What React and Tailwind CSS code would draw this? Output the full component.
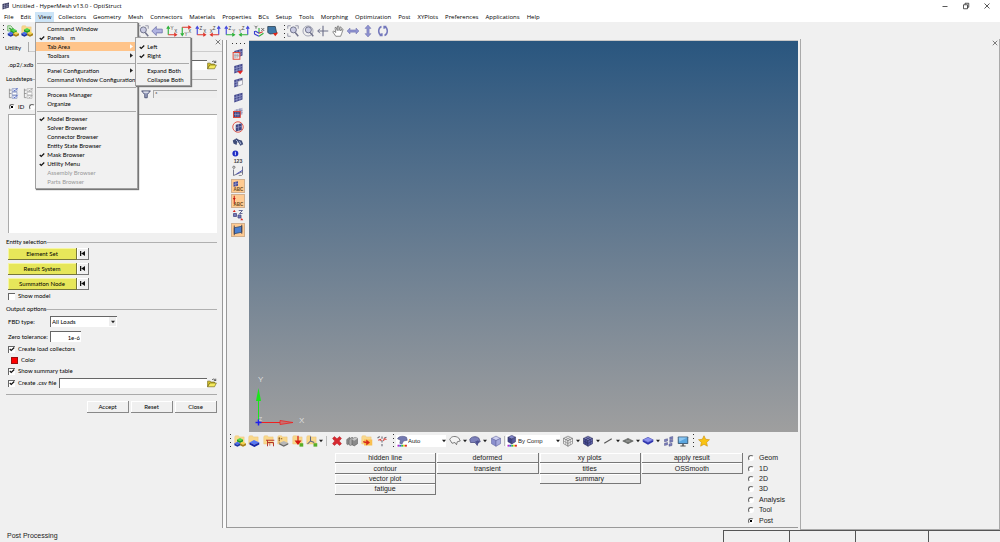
import { useState } from "react";
import clsx from "clsx";

const MENUS = [
  "File", "Edit", "View", "Collectors", "Geometry", "Mesh", "Connectors", "Materials", "Properties", "BCs",
  "Setup", "Tools", "Morphing", "Optimization", "Post", "XYPlots", "Preferences", "Applications", "Help",
];

const VIEW_MENU = [
  [
    { label: "Command Window" },
    { label: "Panels", hint: "m", checked: true },
    { label: "Tab Area", sub: true, active: true },
    { label: "Toolbars", sub: true },
  ],
  [
    { label: "Panel Configuration", sub: true },
    { label: "Command Window Configuration", sub: true },
  ],
  [{ label: "Process Manager" }, { label: "Organize" }],
  [
    { label: "Model Browser", checked: true },
    { label: "Solver Browser" },
    { label: "Connector Browser" },
    { label: "Entity State Browser" },
    { label: "Mask Browser", checked: true },
    { label: "Utility Menu", checked: true },
    { label: "Assembly Browser", disabled: true },
    { label: "Parts Browser", disabled: true },
  ],
];

const TAB_AREA_MENU = [
  [
    { label: "Left", checked: true },
    { label: "Right", checked: true },
  ],
  [{ label: "Expand Both" }, { label: "Collapse Both" }],
];

const PANEL_COLUMNS = [
  ["hidden line", "contour", "vector plot", "fatigue"],
  ["deformed", "transient"],
  ["xy plots", "titles", "summary"],
  ["apply result", "OSSmooth"],
];

const PAGES = ["Geom", "1D", "2D", "3D", "Analysis", "Tool", "Post"];

/* ---------- icons ---------- */

function Svg({ children, className = "size-3" }) {
  return (
    <svg viewBox="0 0 16 16" className={clsx("shrink-0", className)} fill="none" aria-hidden="true">
      {children}
    </svg>
  );
}

const Folder = () => (
  <path d="M1 2.5l1-1.5h4l1 1.5h6.5v9.5H1z" fill="#f9d88c" stroke="#ecc070" strokeWidth=".6" />
);

const Block = ({ x, y, c, d }) => (
  <g>
    <path d={`M${x} ${y + 2}l4-2 4 2-4 2z`} fill={c} />
    <path d={`M${x} ${y + 2}l4 2 4-2v2.5l-4 2-4-2z`} fill={d} />
  </g>
);

const IconBlocks = () => (
  <Svg>
    <Folder />
    <Block x={4} y={4} c="#4fd84a" d="#1f9c26" />
    <Block x={0.5} y={9} c="#4a6cf0" d="#1d35a8" />
    <Block x={8} y={9} c="#f5d54a" d="#a88018" />
  </Svg>
);
const IconImportBlocks = () => (
  <Svg>
    <path d="M1 1h4l2 2v5H1z" fill="#d5ecd0" stroke="#58a850" />
    <path d="M3 4l5 4M8 4v4H4" stroke="#2b9a2b" strokeWidth="1.6" />
    <Block x={5} y={5} c="#4fd84a" d="#1f9c26" />
    <Block x={1} y={9} c="#4a6cf0" d="#1d35a8" />
    <Block x={8} y={9} c="#f5d54a" d="#a88018" />
  </Svg>
);
const IconBlueBlock = () => (
  <Svg>
    <Folder />
    <path d="M2 10l6-3.500 7 3.500-6.500 3z" fill="#5577f5" />
    <path d="M2 10l6.500 3 6.500-3v2.500L8.500 16 2 12.500z" fill="#1626a5" />
  </Svg>
);
const IconProperty = () => (
  <Svg>
    <Folder />
    <path d="M4 7h11M6 7v8M6 10h7M9 14V10h5v5" stroke="#b5342a" strokeWidth="1.300" />
    <path d="M8 12h4" stroke="#eee" />
  </Svg>
);
const IconMaterial = () => (
  <Svg>
    <Folder />
    <path d="M3 3v7M2 5h5" stroke="#8a5a20" strokeWidth="1.500" strokeDasharray="2 1" />
    <path d="M3 10.500L9 8l6 2.500-6 3z" fill="#b7b7b7" />
    <path d="M3 10.500l6 3 6-3v2L9 15.500l-6-3z" fill="#6a6a6a" />
  </Svg>
);
const IconLoad = () => (
  <Svg>
    <Folder />
    <path d="M8 1v9M5 8h6l-3 4z" stroke="#d3180f" strokeWidth="1.600" fill="#d3180f" />
    <rect x="10" y="11" width="5" height="4.500" fill="#58ae28" />
  </Svg>
);
const IconSystem = () => (
  <Svg>
    <Folder />
    <path d="M6 2v6l-4 4M6 8l5 2" stroke="#5f6480" strokeWidth="1.400" />
    <rect x="10" y="11" width="5" height="4.500" fill="#58ae28" />
  </Svg>
);
const IconDelete = () => (
  <Svg>
    <path d="M2 4.500L4.500 2 8 5l3.500-3L14 4.500 11 8l3 3.500-2.500 2.500L8 11l-3.500 3L2 11.500 5 8z" fill="#d62a30" stroke="#a9161c" strokeWidth=".6" />
  </Svg>
);
const IconStack = () => (
  <Svg>
    <path d="M1 6l4-3v8l-3 2-1-1z" fill="#8d8d8d" stroke="#555" strokeWidth=".7" />
    <path d="M4 6l4-3 2 1v8l-4 2-2-1z" fill="#a9a9a9" stroke="#555" strokeWidth=".7" />
    <path d="M8 6l4-3 3.500 1.500v7L11 14.500 8 13z" fill="#8a8a8a" stroke="#555" strokeWidth=".7" />
    <path d="M8 6l4-3 3.500 1.500L11 7.500z" fill="#c6c6c6" />
  </Svg>
);
const IconCardEdit = () => (
  <Svg>
    <Folder />
    <path d="M4 6h11v8H4z" fill="#f9bf4e" />
    <path d="M3 8l4 1V6l5 4-5 4v-3l-4-1z" fill="#d6281b" />
  </Svg>
);
const IconNumbers = () => (
  <Svg>
    <path d="M2 4l3-2M11 4l3-1M8 2v3M8 7v3M8 12v3" stroke="#6c6c78" strokeWidth="1.500" />
    <path d="M3 7l3-1 1 2M10 8l1-3 3 1" stroke="#d8453c" strokeWidth="1.400" />
  </Svg>
);
const Rainbow = () => (
  <g>
    <rect x="2" y="13" width="2.500" height="2.500" fill="#b02ac8" />
    <rect x="4.500" y="13" width="2.500" height="2.500" fill="#3a4de0" />
    <rect x="7" y="13" width="2.500" height="2.500" fill="#2cb64a" />
    <rect x="9.500" y="13" width="2.500" height="2.500" fill="#e8c82a" />
    <rect x="12" y="13" width="2.500" height="2.500" fill="#d8262c" />
  </g>
);
const IconAuto = () => (
  <Svg>
    <path d="M2 5c2-4 8-4 12-2l1 4-5 1-2 4-3-1 1-4z" fill="#7479b0" stroke="#45487c" strokeWidth=".7" />
    <Rainbow />
  </Svg>
);
const Cube = ({ top, left, right, line = "#2e2f5c" }) => (
  <g stroke={line} strokeWidth=".8">
    <path d="M2 4.500L8 1.500l6 3-6 3z" fill={top} />
    <path d="M2 4.500l6 3V15l-6-3.500z" fill={left} />
    <path d="M14 4.500l-6 3V15l6-3.500z" fill={right} />
  </g>
);
const IconByComp = () => (
  <Svg>
    <g transform="scale(.85) translate(1 -1)">
      <Cube top="#8286c8" left="#3c3f86" right="#54589c" />
    </g>
    <Rainbow />
  </Svg>
);
const IconWireSurface = () => (
  <Svg>
    <path d="M1 6c2-5 8-5 12-2l2 4-4 1-1 4-2-3-4 1z" stroke="#666" strokeWidth="1.100" fill="#f3f3f3" />
  </Svg>
);
const IconShadedSurface = () => (
  <Svg>
    <path d="M1 6c2-4 8-5 12-2l2 5-3 1-1 4-3-4-6 0z" fill="#7c80ba" stroke="#474a7d" />
    <path d="M8 9l4-2 2 2-3 4z" fill="#4d5191" />
  </Svg>
);
const IconGlassCube = () => (
  <Svg>
    <Cube top="#cdd0f0" left="#8a8fce" right="#a5a9dc" line="#6468a5" />
  </Svg>
);
const CubeMesh = ({ line }) => (
  <path d="M5 3l6 3v7.300M11 3L5 6v7.300M2 8l6 3.300L14 8" stroke={line} strokeWidth=".7" />
);
const IconMeshWire = () => (
  <Svg>
    <Cube top="#f6f6f6" left="#eee" right="#f2f2f2" line="#666" />
    <CubeMesh line="#777" />
  </Svg>
);
const IconMeshCube = () => (
  <Svg>
    <Cube top="#8084c4" left="#4c5098" right="#6468b0" />
    <CubeMesh line="#26285c" />
  </Svg>
);
const IconLine = () => (
  <Svg>
    <path d="M3 11L13 5" stroke="#555" strokeWidth="1.500" />
  </Svg>
);
const IconShell = () => (
  <Svg>
    <path d="M1 8l7-3.500L15 8l-7 3.500z" fill="#6f736f" stroke="#444" strokeWidth=".7" />
    <path d="M4.500 6.200l7 3.600M11.500 6.200l-7 3.600" stroke="#aaa" strokeWidth=".7" />
  </Svg>
);
const IconSolid = () => (
  <Svg>
    <path d="M1 6.500L8 3l7 3.500L8 10z" fill="#8a90f0" stroke="#3338a8" strokeWidth=".7" />
    <path d="M1 6.500L8 10l7-3.500V9l-7 4-7-4z" fill="#2f35b0" />
  </Svg>
);
const IconExplode = () => (
  <Svg>
    <path d="M2 6l4-1v3l-4 1zM9 3l4-1v3L9 6zM9 7l4-1v3l-4 1zM2 11l4-1v3l-4 1zM8 12l4-1v3l-4 1z" fill="#7d80bd" stroke="#45487e" strokeWidth=".6" />
  </Svg>
);
const IconMonitor = () => (
  <Svg>
    <rect x="1" y="2" width="14" height="10" rx="1" fill="#46637c" />
    <rect x="2.300" y="3.300" width="11.400" height="7.400" fill="#5aa6e0" />
    <path d="M2.300 3.300h11.400L3 9z" fill="#8ec8f2" />
    <path d="M7 12h2v2h2.500v1.200h-7V14H7z" fill="#555" />
  </Svg>
);
const IconStar = () => (
  <Svg>
    <path d="M8 1l2.200 4.700 5.100.6-3.800 3.500 1 5.100L8 12.400 3.500 14.900l1-5.100L.7 6.300l5.100-.6z" fill="#f9c312" stroke="#c98d0c" strokeWidth=".8" />
  </Svg>
);
const IconZoom = ({ ring }) => (
  <Svg>
    {ring ? (
      <circle cx="8" cy="8" r="6.700" stroke="#9a9cae" strokeWidth="1.200" />
    ) : (
      <path d="M1 5V1h4M11 1h4v4M1 11v4h4" stroke="#8f91a4" strokeWidth="1.200" />
    )}
    <circle cx="8.500" cy="6.500" r="4" fill="#c9cbe2" stroke="#70738c" strokeWidth="1.300" />
    <path d="M11 10l4 5" stroke="#70738c" strokeWidth="2" />
  </Svg>
);
const IconBack = () => (
  <Svg>
    <path d="M1 8l6-6v3.500h8v5H7V14z" fill="#b0b3e0" stroke="#666aa5" />
  </Svg>
);

/* Two axes meeting in a corner, used for the standard views. */
const IconAxes = ({ a, b, up = "Y", side = "X", flip, down }) => {
  const corner = flip ? 13 : 3;
  const base = down ? 3 : 13;
  const tip = down ? 14 : 2;
  const end = flip ? 2 : 14;
  const s = flip ? 1 : -1;
  const t = down ? -1 : 1;
  return (
    <Svg>
      <path d={`M${corner} ${base}V${tip}M${corner - 2} ${tip + 3 * t}L${corner} ${tip}l2 ${3 * t}`} stroke={a} strokeWidth="1.500" />
      <path d={`M${corner} ${base}H${end}M${end + 3 * s} ${base - 2}L${end} ${base}l${3 * s} 2`} stroke={b} strokeWidth="1.500" />
      <text x={flip ? 5 : 6} y={down ? 15 : 6} fontSize="6" fontFamily="Liberation Sans, sans-serif" fill="#444">
        {up}
      </text>
      <text x={flip ? 1 : 11} y="11" fontSize="6" fontFamily="Liberation Sans, sans-serif" fill="#444">
        {side}
      </text>
    </Svg>
  );
};
const IconIso = () => (
  <Svg>
    <path d="M8 11V4" stroke="#2eb13a" strokeWidth="1.500" />
    <path d="M8 11l-5-3M2 8v4l6 3" stroke="#3a3fd0" strokeWidth="1.500" />
    <path d="M8 15l6-4" stroke="#2eb13a" strokeWidth="1.500" />
    <path d="M8 11l5-2" stroke="#d8362c" strokeWidth="1.500" />
    <path d="M2 1l2 2 2-2M4 3v2M11 4l4 4M15 4l-4 4" stroke="#555" strokeWidth="1.100" />
  </Svg>
);
const IconSaveView = () => (
  <Svg>
    <path d="M1 2h10l2 9-9 1-3-2z" fill="#3f78a8" stroke="#26394c" />
    <path d="M8 11l7-1-4 5z" fill="#e02416" />
  </Svg>
);
const IconMove = () => (
  <Svg>
    <path d="M8 1v14M1 8h14" stroke="#6b6e88" strokeWidth="1.500" />
    <path d="M4 5L1 8l3 3" stroke="#6b6e88" strokeWidth="1.300" />
  </Svg>
);
const IconHand = () => (
  <Svg>
    <path d="M5 15l-4-6 1.500-1L5 10 4 3.500 5.500 3 7 7.500 7.300 1.500H9L9.300 7.500l1.500-5 1.500.5L11.500 8l2-3 1.300.8L13 11l-1.500 4z" fill="#fff" stroke="#686868" />
  </Svg>
);
const IconLeftRight = () => (
  <Svg>
    <path d="M0 8l4-4v2.500h8V4l4 4-4 4V9.500H4V12z" fill="#8e92d0" stroke="#666aa8" strokeWidth=".6" />
  </Svg>
);
const IconUpDown = () => (
  <Svg>
    <path d="M8 0l4 4.500H9.500v7H12L8 16l-4-4.500h2.500v-7H4z" fill="#8e92d0" stroke="#666aa8" strokeWidth=".6" />
  </Svg>
);
const IconRotate = () => (
  <Svg>
    <path d="M6 2C1 4 1 12 6 14M3.500 14H6.500V11M10 14c5-2 5-10 0-12M12.500 2H9.500v3" stroke="#7478bc" strokeWidth="2" />
  </Svg>
);

const Grid = ({ light }) => (
  <g>
    <path d="M3 4l11-3v9L3 14z" fill={light ? "#b9bbd4" : "#454a8c"} />
    <path d="M6.500 3v10M10.500 2v10M3 7.500l11-3M3 11l11-3.500" stroke={light ? "#70739e" : "#a0a4d4"} strokeWidth=".9" />
  </g>
);
const IconMask = () => (
  <Svg>
    <Grid />
    <rect x="1.500" y="6" width="9" height="9" fill="#eee" fillOpacity=".8" stroke="#e0463a" strokeWidth="1.300" />
    <path d="M4 8v5M7 8v5M3 10h6" stroke="#aaa" />
  </Svg>
);
const IconReverse = () => (
  <Svg>
    <Grid />
    <path d="M7 11l8-1-4 5z" fill="#e02424" />
  </Svg>
);
const IconUnmaskAdjacent = () => (
  <Svg>
    <Grid />
    <path d="M8 6l6-2v6l-6 2z" fill="#f4f4fa" stroke="#999" strokeWidth=".7" />
  </Svg>
);
const IconUnmask = () => (
  <Svg>
    <Grid />
  </Svg>
);
const IconMaskOutside = () => (
  <Svg>
    <Grid light />
    <rect x="2" y="6" width="9" height="8" fill="#41457f" stroke="#e0463a" strokeWidth="1.300" />
    <path d="M5 7v6M8 7v6M3 10h7" stroke="#9ea2d0" strokeWidth=".8" />
  </Svg>
);
const IconSpherical = () => (
  <Svg>
    <circle cx="8" cy="8" r="7" stroke="#e0564c" strokeWidth="1.300" />
    <path d="M5 5l8-2v9l-8 2z" fill="#3f437f" />
    <path d="M8.500 4v9M5 9l8-2" stroke="#9ea2d0" strokeWidth=".8" />
  </Svg>
);
const IconFind = () => (
  <Svg>
    <path d="M1 6l5-3 3 2 4 1 2 5-4 2-2-4-2-1-1 4-4-2z" fill="#3f4c78" />
    <path d="M5 5l3 3M10 7l2 4" stroke="#aab6dc" strokeWidth="1.300" />
  </Svg>
);
const IconNumbering = () => (
  <Svg className="size-[14px]">
    <circle cx="5" cy="4" r="3.400" fill="#1d2cc4" />
    <path d="M5 2v4" stroke="#cdd2ff" strokeWidth="1.200" />
    <text x="3" y="15" fontSize="6" fontWeight="bold" fontFamily="Liberation Sans, sans-serif" fill="#444">
      123
    </text>
  </Svg>
);
const IconMeasure = () => (
  <Svg>
    <path d="M2 6v8M14 2v11M2 14l12-5" stroke="#666a80" strokeWidth="1.200" />
    <circle cx="2.500" cy="3" r="1.500" stroke="#555" />
    <path d="M6 12l8-5" stroke="#3a3fb8" strokeWidth="1.200" />
    <path d="M9 14h4" stroke="#777" />
  </Svg>
);
const AbcText = () => (
  <text x="2" y="15" fontSize="6" fontWeight="bold" fontFamily="Liberation Sans, sans-serif" fill="#6a4a20">
    ABC
  </text>
);
const IconElementAbc = () => (
  <Svg>
    <path d="M2 3l6-1.500v6L2 9z" fill="#454a96" />
    <path d="M5 2v6M2 6l6-1.500" stroke="#a0a4d8" strokeWidth=".8" />
    <AbcText />
  </Svg>
);
const IconLoadAbc = () => (
  <Svg>
    <path d="M3 1v11" stroke="#c3170f" strokeWidth="1.300" />
    <path d="M1 4l2 3 2-3z" fill="#c3170f" />
    <AbcText />
  </Svg>
);
const IconNodeIds = () => (
  <Svg>
    <path d="M2 6h4v4H2zM8 8h4v4H8z" fill="#7478b8" stroke="#44477f" />
    <path d="M9 2h5l-4 4h4" stroke="#55588a" strokeWidth="1.200" />
    <path d="M3 1l2 3H1zM13 12l2 3h-4z" fill="#dd2a20" />
  </Svg>
);
const IconShrink = () => (
  <Svg>
    <path d="M3 5l10-2v8L3 13z" fill="#4a7fd0" stroke="#2b4468" />
    <path d="M3 2v13M13 1v12" stroke="#3a3f5a" strokeWidth="1.200" />
  </Svg>
);
const IconOpen = () => (
  <Svg className="size-[10px]">
    <path d="M1 14V5h4l1 1.500h6V9H4z" fill="#d8c428" stroke="#6e6414" />
    <path d="M1 14l3.500-6H15l-3 6z" fill="#f4e95c" stroke="#6e6414" />
    <path d="M8 3c2-2 4-2 6 1M14 1v3h-3" stroke="#222" />
  </Svg>
);
const IconTree = ({ dim }) => (
  <Svg className="size-[11px]">
    <path d="M2 1v13M2 3h3M2 8h3M2 14h3" stroke="#777" />
    <path d="M6 1h7v4H6zM6 6h7v4H6zM6 11h7v4H6z" fill="#fff" stroke={dim ? "#aaa" : "#7686b8"} />
    <path d="M8 3l2 1 4-4M8 13l2 1 4-4" stroke={dim ? "#999" : "#2f4cc0"} strokeWidth="1.200" />
  </Svg>
);
const IconFilter = () => (
  <Svg className="size-[10px]">
    <path d="M1 3h14L10 9v5H6V9z" fill="#9aa0c0" stroke="#3f4668" strokeWidth="1.300" />
    <path d="M4 5h8" stroke="#fff" strokeWidth="1.500" />
  </Svg>
);

/* ---------- small controls ---------- */

const Check = () => (
  <svg viewBox="0 0 8 8" className="size-[6px] shrink-0" fill="none" aria-hidden="true">
    <path d="M1 4l2 2L7 2" stroke="#111" strokeWidth="1.600" />
  </svg>
);

const Arrow = () => (
  <svg viewBox="0 0 6 6" className="size-1 shrink-0" aria-hidden="true">
    <path d="M0 1h6L3 5z" fill="#222" />
  </svg>
);

function Grip({ horizontal }) {
  return (
    <div className={clsx("flex shrink-0 justify-between", horizontal ? "w-[13px]" : "h-[13px] flex-col")}>
      <span className="size-px bg-[#333]" />
      <span className="size-px bg-[#333]" />
      <span className="size-px bg-[#333]" />
      <span className="size-px bg-[#333]" />
    </div>
  );
}

function Tool({ icon, label, on }) {
  return (
    <button
      type="button"
      aria-label={label}
      className={clsx(
        "flex size-[14px] shrink-0 items-center justify-center",
        on && "border border-[#d0b090] bg-[#ffcb92]"
      )}
    >
      {icon}
    </button>
  );
}

function DropTool({ icon, label }) {
  return (
    <button type="button" aria-label={label} className="flex w-[20px] shrink-0 items-center gap-[2px]">
      {icon}
      <Arrow />
    </button>
  );
}

function CheckBox({ label, defaultChecked }) {
  return (
    <label className="flex h-2 items-center gap-[3px] whitespace-nowrap">
      <span className="grid size-[7px] place-items-center">
        <input
          type="checkbox"
          defaultChecked={defaultChecked}
          className="peer col-start-1 row-start-1 size-[7px] appearance-none border-t border-l border-[#666] bg-white"
        />
        <span className="pointer-events-none invisible col-start-1 row-start-1 peer-checked:visible">
          <Check />
        </span>
      </span>
      {label}
    </label>
  );
}

function Radio({ label, name, checked, onChange, wide }) {
  return (
    <label className={clsx("flex items-center whitespace-nowrap", wide ? "gap-[5px]" : "gap-[3px]")}>
      <span className="grid size-[6px] place-items-center">
        <input
          type="radio"
          name={name}
          checked={checked}
          onChange={onChange}
          className="peer col-start-1 row-start-1 size-[6px] appearance-none rounded-full border border-[#666] border-r-white border-b-white bg-white"
        />
        <span className="pointer-events-none invisible col-start-1 row-start-1 size-[2px] bg-black peer-checked:visible" />
      </span>
      {label}
    </label>
  );
}

function Group({ title }) {
  return (
    <div className="flex h-2 items-center">
      <span>{title}</span>
      <span className="flex-1 border-t border-[#b0b0b0]" />
    </div>
  );
}

function CloseX() {
  return (
    <button type="button" aria-label="Close tab area" className="flex size-2 items-center justify-center">
      <svg viewBox="0 0 8 8" className="size-[6px]" aria-hidden="true">
        <path d="M1 1l6 6M7 1L1 7" stroke="#555" strokeWidth="1" />
      </svg>
    </button>
  );
}

function Menu({ groups, className, submenu }) {
  return (
    <div
      role="menu"
      className={clsx(
        "absolute z-10 border border-[#a0a0a0] bg-[#f1f1f1] font-['Lato',sans-serif] text-[6px] text-black shadow-[1px_1px_1px_#777]",
        className
      )}
    >
      {groups.map((items, i) => (
        <div key={i}>
          {i > 0 && (
            <div className="flex h-[6px] items-center px-px">
              <div className="w-full border-t border-[#aaa]" />
            </div>
          )}
          {items.map((item) => (
            <div key={item.label} className="relative">
              <button
                type="button"
                role="menuitem"
                disabled={item.disabled}
                className={clsx(
                  "flex h-[9px] w-full items-center pr-1 leading-[9px] whitespace-nowrap",
                  item.active && "bg-[#ffc48a]",
                  item.disabled && "text-[#999]"
                )}
              >
                <span className="flex w-[11px] shrink-0 justify-center">{item.checked && <Check />}</span>
                <span>{item.label}</span>
                {item.hint && <span className="pl-[6px]">{item.hint}</span>}
                {item.sub && (
                  <svg viewBox="0 0 4 6" className="ml-auto h-[5px] w-[3px] shrink-0" aria-hidden="true">
                    <path d="M0 0l4 3-4 3z" fill={item.active ? "#fff" : "#222"} />
                  </svg>
                )}
              </button>
              {item.active && submenu}
            </div>
          ))}
        </div>
      ))}
    </div>
  );
}

/* ---------- page parts ---------- */

function TitleBar() {
  return (
    <header className="flex h-3 items-center bg-white pl-[2px]">
      <Svg className="size-2">
        <path d="M1 4l13-3v10L1 15z" fill="#34365a" />
        <path d="M5 3v11M10 2v10M1 8l13-3M1 12l13-4" stroke="#a7a9c8" />
      </Svg>
      <h1 className="pl-[2px]">Untitled - HyperMesh v13.0 - OptiStruct</h1>
      <div className="ml-auto flex gap-[13px] pr-[9px]">
        <button type="button" aria-label="Minimize">
          <Svg className="size-2">
            <path d="M3 9h10" stroke="#222" strokeWidth="1.500" />
          </Svg>
        </button>
        <button type="button" aria-label="Restore">
          <Svg className="size-2">
            <path d="M3 5.500h8v8H3zM6 5V2.500h7.500v8H11" stroke="#222" strokeWidth="1.500" />
          </Svg>
        </button>
        <button type="button" aria-label="Close">
          <Svg className="size-2">
            <path d="M3 3l10 10M13 3L3 13" stroke="#222" strokeWidth="1.500" />
          </Svg>
        </button>
      </div>
    </header>
  );
}

function MenuBar() {
  const [open, setOpen] = useState("View");

  return (
    <nav className="flex h-[10px] items-center gap-px bg-white pl-px">
      {MENUS.map((name) => (
        <div key={name} className="relative">
          <button
            type="button"
            onClick={() => setOpen(open === name ? null : name)}
            className={clsx("block h-[10px] px-[3px] leading-[10px]", open === name && "bg-[#cce4f7]")}
          >
            {name}
          </button>
          {name === "View" && open === "View" && (
            <Menu
              groups={VIEW_MENU}
              className="top-full left-0 w-[103px] pt-px pb-[2px]"
              submenu={<Menu groups={TAB_AREA_MENU} className="top-[-5px] left-[99px] w-[56px] pt-1 pb-px" />}
            />
          )}
        </div>
      ))}
    </nav>
  );
}

function MainToolbar() {
  return (
    <div className="flex h-4 items-end pl-[3px]">
      <Grip />
      <div className="flex w-[30px] justify-between pl-[2px]">
        <Tool label="New model" icon={<IconImportBlocks />} />
        <Tool label="Open model" icon={<IconBlocks />} />
      </div>
      <div className="ml-[102px] flex w-[144px] justify-between">
        <Tool label="Zoom" icon={<IconZoom />} />
        <Tool label="Previous view" icon={<IconBack />} />
        <Tool label="XY top view" icon={<IconAxes a="#2eb13a" b="#e0342a" />} />
        <Tool label="XY bottom view" icon={<IconAxes a="#2eb13a" b="#e0342a" down />} />
        <Tool label="XZ left view" icon={<IconAxes a="#4348dc" b="#e0342a" up="Z" />} />
        <Tool label="XZ right view" icon={<IconAxes a="#4348dc" b="#e0342a" up="Z" flip />} />
        <Tool label="YZ front view" icon={<IconAxes a="#4348dc" b="#2eb13a" up="Z" side="Y" />} />
        <Tool label="YZ rear view" icon={<IconAxes a="#4348dc" b="#2eb13a" up="Z" side="Y" flip />} />
        <Tool label="Isometric view" icon={<IconIso />} />
        <Tool label="User views" icon={<IconSaveView />} />
      </div>
      <div className="ml-1 flex w-[106px] items-end justify-between">
        <Grip />
        <Tool label="Fit" icon={<IconZoom />} />
        <Tool label="Circle zoom" icon={<IconZoom ring />} />
        <Tool label="Center" icon={<IconMove />} />
        <Tool label="Pan" icon={<IconHand />} />
        <Tool label="Pan horizontally" icon={<IconLeftRight />} />
        <Tool label="Pan vertically" icon={<IconUpDown />} />
        <Tool label="Rotate" icon={<IconRotate />} />
      </div>
    </div>
  );
}

function EntityRow({ label }) {
  return (
    <div className="flex h-3">
      <button
        type="button"
        className="w-[69px] border-r border-b border-[#77773a] bg-[#e6e65a] shadow-[inset_1px_1px_#f6f6a0]"
      >
        {label}
      </button>
      <button
        type="button"
        aria-label={`Reset ${label}`}
        className="flex w-[12px] items-center justify-center border-r border-b border-[#777] bg-[#f0f0f0] shadow-[inset_1px_1px_#fff]"
      >
        <svg viewBox="0 0 6 6" className="size-[5px]" aria-hidden="true">
          <path d="M0 0h1.500v6H0zM6 0v6L1.500 3z" fill="#111" />
        </svg>
      </button>
    </div>
  );
}

const field = "border-t border-l border-[#666] bg-white";

function UtilityPanel() {
  const [idMode, setIdMode] = useState("ID");

  return (
    <aside className="w-[222px] shrink-0 font-['Lato',sans-serif] text-[6px] text-black">
      <div className="flex h-[14px]">
        <button type="button" className="mt-1 w-[29px] border-r border-[#aaa] pt-[2px] pr-[2px]">
          Utility
        </button>
        <div className="flex flex-1 items-start justify-end border-b border-[#ccc]">
          <CloseX />
        </div>
      </div>

      <div className="pr-[5px] pl-[6px]">
        <div className="mt-2 flex h-[10px] items-center pl-[2px]">
          <label htmlFor="op2" className="w-[50px] whitespace-nowrap">.op2/.xdb file:</label>
          <input id="op2" type="text" className={clsx("h-[10px] min-w-0 flex-1", field)} />
          <button type="button" aria-label="Browse results"><IconOpen /></button>
        </div>

        <div className="mt-[5px]"><Group title="Loadsteps" /></div>
        <div className="mt-[5px] flex h-[11px] items-center gap-1 pl-[2px]">
          <button type="button" aria-label="Select all"><IconTree /></button>
          <button type="button" aria-label="Select none"><IconTree dim /></button>
          <div className="ml-auto flex items-center gap-[2px]">
            <IconFilter />
            <input
              type="text"
              aria-label="Filter"
              defaultValue="*"
              className="h-2 w-[64px] border-t border-l border-[#aaa] bg-[#eee] pl-px"
            />
          </div>
        </div>
        <div className="mt-1 flex h-2 items-center gap-[5px] pl-[3px]">
          <Radio name="loadstep" label="ID" checked={idMode === "ID"} onChange={() => setIdMode("ID")} />
          <Radio name="loadstep" label="Name" checked={idMode === "Name"} onChange={() => setIdMode("Name")} />
        </div>
        <div className="mt-[3px] ml-[2px] h-[119px] border-t border-l border-[#aaa] bg-white" />

        <div className="mt-[5px]"><Group title="Entity selection" /></div>
        <div className="mt-[2px] flex flex-col gap-[3px] pl-[2px]">
          <EntityRow label="Element Set" />
          <EntityRow label="Result System" />
          <EntityRow label="Summation Node" />
        </div>
        <div className="mt-[2px] pl-[2px]"><CheckBox label="Show model" /></div>

        <div className="mt-[5px]"><Group title="Output options" /></div>
        <div className="mt-[3px] flex flex-col gap-1 pl-[2px]">
          <div className="flex h-[11px] items-center">
            <label htmlFor="fbd" className="w-[42px]">FBD type:</label>
            <div className="grid w-[67px] items-center justify-items-end">
              <select id="fbd" className={clsx("col-start-1 row-start-1 h-[11px] w-full appearance-none pl-px", field)}>
                <option>All Loads</option>
              </select>
              <span className="pointer-events-none col-start-1 row-start-1 mr-px flex h-[9px] w-[7px] items-center justify-center bg-[#eee]">
                <Arrow />
              </span>
            </div>
          </div>
          <div className="flex h-[11px] items-center">
            <label htmlFor="tol" className="w-[42px] whitespace-nowrap">Zero tolerance:</label>
            <input id="tol" type="text" defaultValue="1e-6" className={clsx("h-[11px] w-[31px] pr-px text-right", field)} />
          </div>
        </div>
        <div className="mt-[3px] flex flex-col gap-[3px] pl-[2px]">
          <CheckBox label="Create load collectors" defaultChecked />
          <button type="button" className="flex h-2 items-center gap-[3px] pl-[3px]">
            <span className="size-[7px] border border-[#911] bg-[#f00]" />
            Color
          </button>
          <CheckBox label="Show summary table" defaultChecked />
        </div>
        <div className="mt-[3px] flex h-[10px] items-center gap-[3px] pl-[2px]">
          <CheckBox label="Create .csv file" defaultChecked />
          <div className="flex min-w-0 flex-1">
            <input type="text" aria-label="CSV file" className={clsx("h-[10px] min-w-0 flex-1", field)} />
            <button type="button" aria-label="Browse CSV"><IconOpen /></button>
          </div>
        </div>

        <div className="mt-[6px] flex justify-end gap-[2px] border-t border-[#aaa] pt-[6px]">
          {["Accept", "Reset", "Close"].map((name) => (
            <button
              key={name}
              type="button"
              className="h-3 w-[42px] border-r border-b border-[#888] shadow-[inset_1px_1px_#fff]"
            >
              {name}
            </button>
          ))}
        </div>
      </div>
    </aside>
  );
}

function SideToolbar() {
  return (
    <div className="flex w-[22px] shrink-0 flex-col items-center pt-[5px]">
      <Grip horizontal />
      <div className="mt-[3px] flex h-[190px] flex-col justify-between">
        <Tool label="Mask" icon={<IconMask />} />
        <Tool label="Reverse" icon={<IconReverse />} />
        <Tool label="Unmask adjacent" icon={<IconUnmaskAdjacent />} />
        <Tool label="Unmask all" icon={<IconUnmask />} />
        <Tool label="Mask not shown" icon={<IconMaskOutside />} />
        <Tool label="Spherical clipping" icon={<IconSpherical />} />
        <Tool label="Find" icon={<IconFind />} />
        <Tool label="Numbers" icon={<IconNumbering />} />
        <Tool label="Measure" icon={<IconMeasure />} />
        <Tool label="Element handles" icon={<IconElementAbc />} on />
        <Tool label="Load handles" icon={<IconLoadAbc />} on />
        <Tool label="Node ids" icon={<IconNodeIds />} />
        <Tool label="Shrink elements" icon={<IconShrink />} on />
      </div>
    </div>
  );
}

function Viewport() {
  return (
    <div className="mt-[2px] flex flex-1 items-end border-t border-[#c8c8c8] bg-linear-to-b from-[#29567f] to-[#9f9f9f]">
      <svg viewBox="0 0 64 60" className="h-[60px] w-[64px]" aria-hidden="true">
        <path d="M9.500 50V28" stroke="#19e619" />
        <path d="M9.500 16l2.500 13H7z" fill="#19e619" />
        <path d="M10 50.500h22" stroke="#ee2020" />
        <path d="M31 48.500l13 2-13 2z" fill="#c87070" stroke="#ee2020" strokeWidth=".8" />
        <path d="M9.500 47.500v6M6.500 50.500h6" stroke="#2020ee" strokeWidth="1.500" />
        <g fill="#ddd" fontFamily="Liberation Sans, sans-serif" fontSize="8">
          <text x="9" y="10">Y</text>
          <text x="50" y="51">X</text>
          <text x="10" y="49" fontSize="5">Z</text>
        </g>
      </svg>
    </div>
  );
}

function ComboTool({ id, icon, value, label, className }) {
  return (
    <div className={clsx("flex h-3 items-center bg-white", className)}>
      {icon}
      <select id={id} aria-label={label} className="h-3 min-w-0 flex-1 appearance-none bg-white">
        <option>{value}</option>
      </select>
      <Arrow />
    </div>
  );
}

function VisualToolbar() {
  return (
    <div className="flex h-4 items-center pt-px pl-[3px]">
      <Grip />
      <div className="flex w-[88px] justify-between pl-[2px]">
        <Tool label="Assemblies" icon={<IconBlocks />} />
        <Tool label="Components" icon={<IconBlueBlock />} />
        <Tool label="Properties" icon={<IconProperty />} />
        <Tool label="Materials" icon={<IconMaterial />} />
        <Tool label="Load collectors" icon={<IconLoad />} />
        <Tool label="Systems" icon={<IconSystem />} />
      </div>
      <Arrow />
      <div className="mx-[3px] h-[10px] border-l border-[#bbb]" />
      <div className="flex w-[59px] justify-between">
        <Tool label="Delete" icon={<IconDelete />} />
        <Tool label="Organize" icon={<IconStack />} />
        <Tool label="Card edit" icon={<IconCardEdit />} />
        <Tool label="Renumber" icon={<IconNumbers />} />
      </div>
      <div className="px-[2px] pl-1"><Grip /></div>
      <ComboTool
        id="geom-color"
        label="Geometry color mode"
        icon={<IconAuto />}
        value="Auto"
        className="w-[50px]"
      />
      <div className="flex items-center pl-[3px]">
        <DropTool label="Wireframe geometry" icon={<IconWireSurface />} />
        <DropTool label="Shaded geometry" icon={<IconShadedSurface />} />
        <Tool label="Transparency" icon={<IconGlassCube />} />
      </div>
      <div className="mx-px h-[10px] border-l border-[#bbb]" />
      <ComboTool
        id="elem-color"
        label="Element color mode"
        icon={<IconByComp />}
        value="By Comp"
        className="w-[54px]"
      />
      <div className="flex items-center pl-[2px]">
        <DropTool label="Wireframe elements" icon={<IconMeshWire />} />
        <DropTool label="Shaded elements" icon={<IconMeshCube />} />
        <DropTool label="1D elements" icon={<IconLine />} />
        <DropTool label="2D elements" icon={<IconShell />} />
        <DropTool label="3D elements" icon={<IconSolid />} />
        <Tool label="Layers" icon={<IconExplode />} />
        <Tool label="Display options" icon={<IconMonitor />} />
      </div>
      <div className="px-[3px]"><Grip /></div>
      <Tool label="Favorites" icon={<IconStar />} />
    </div>
  );
}

function PanelMenu() {
  const [page, setPage] = useState("Post");

  return (
    <div className="mt-[5px] flex pb-px pl-[108px] text-[7px]">
      <div className="grid flex-1 grid-cols-4 gap-x-px">
        {PANEL_COLUMNS.map((column, i) => (
          <div key={i} className="grid h-[73px] grid-rows-7">
            {column.map((name) => (
              <button
                key={name}
                type="button"
                className="flex min-h-0 items-center justify-center border-r border-b border-[#777] leading-none shadow-[inset_1px_1px_#fff]"
              >
                {name}
              </button>
            ))}
          </div>
        ))}
      </div>
      <div className="grid w-[55px] grid-rows-7 pl-[5px]">
        {PAGES.map((name) => (
          <Radio key={name} name="page" label={name} wide checked={page === name} onChange={() => setPage(name)} />
        ))}
      </div>
    </div>
  );
}

export default function App() {
  return (
    <div className="flex min-h-screen flex-col bg-[#f0f0f0] font-['Liberation_Sans',sans-serif] text-[6px] leading-[8px] text-[#222]">
      <div className="font-['Open_Sans',sans-serif] text-black">
        <TitleBar />
        <MenuBar />
      </div>
      <MainToolbar />

      <div className="flex flex-1">
        <UtilityPanel />
        <div className="mt-[2px] mb-[2px] w-[5px] shrink-0 border-x border-[#999] bg-[#fafafa]" />
        <main className="mb-[2px] flex min-w-0 flex-1 flex-col border-b border-[#999]">
          <div className="flex flex-1">
            <SideToolbar />
            <Viewport />
          </div>
          <VisualToolbar />
          <PanelMenu />
        </main>
        <aside className="mt-px ml-[2px] w-[200px] shrink-0 border-x border-b border-[#aaa]">
          <div className="flex justify-end">
            <CloseX />
          </div>
        </aside>
      </div>

      <footer className="flex h-3 items-center text-[7px]">
        <span className="flex-1 pl-[7px]">Post Processing</span>
        <span className="h-full w-[66px] border-t border-l border-[#555]" />
        <span className="h-full w-[66px] border-t border-l border-[#555]" />
        <span className="h-full w-[73px] border-t border-l border-[#555]" />
        <span className="h-full w-[72px] border-t border-l border-[#555]" />
      </footer>
    </div>
  );
}
